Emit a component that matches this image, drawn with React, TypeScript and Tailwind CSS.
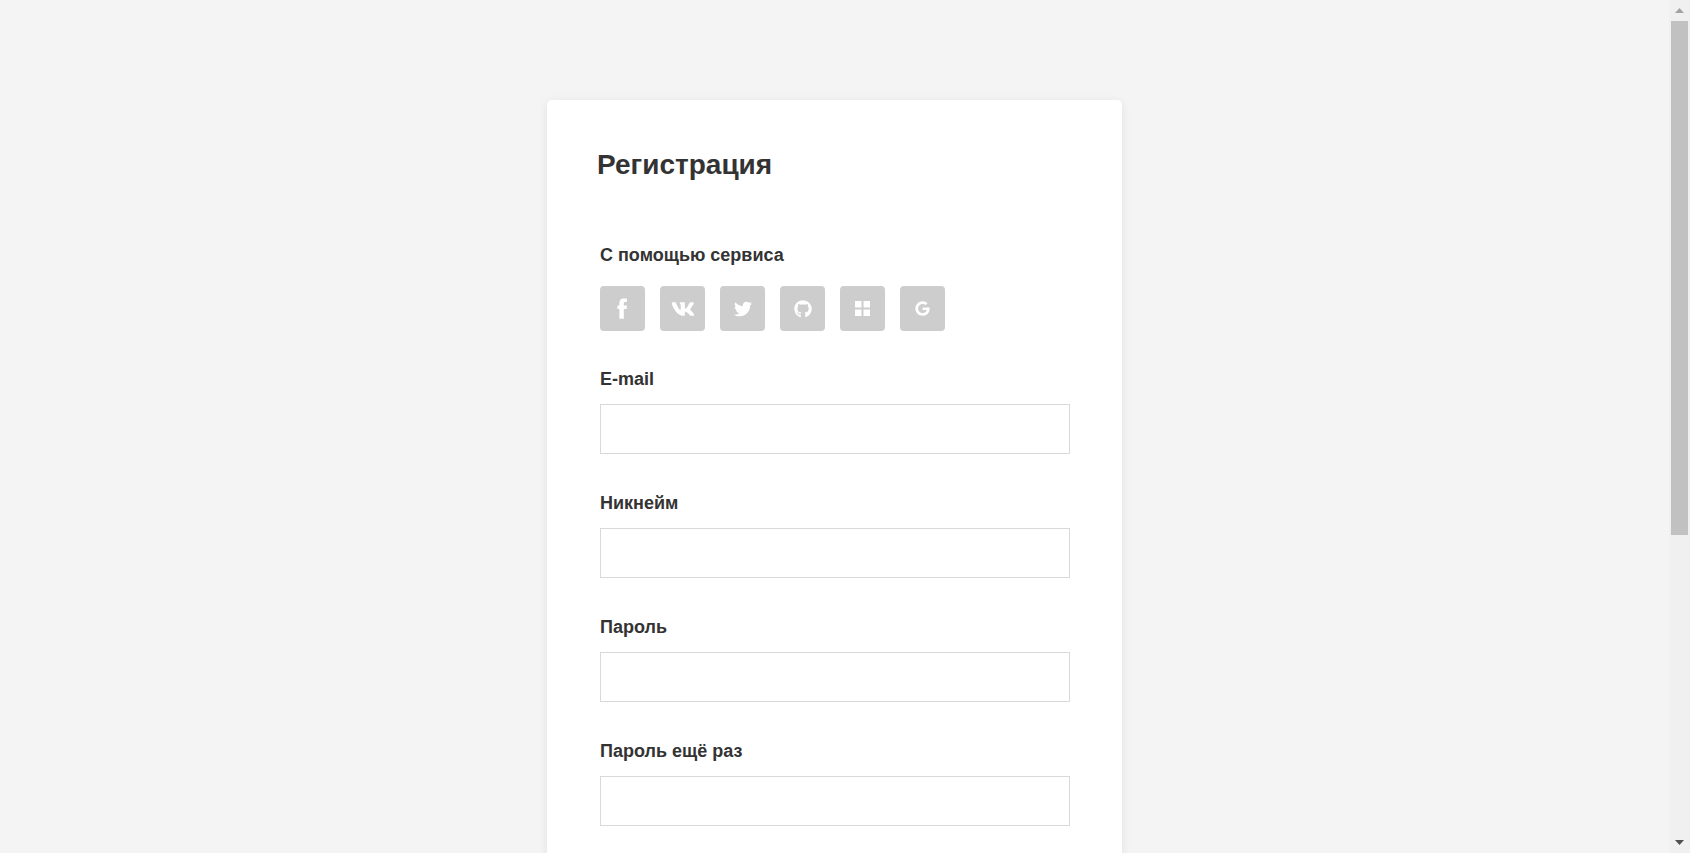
import React from "react";
import { FaTwitter, FaGithub, FaGoogle, FaVk } from "react-icons/fa";

function FacebookIcon() {
  return (
    <svg width="11" height="21" viewBox="0 0 11 21" fill="currentColor" aria-hidden="true">
      <path d="M2.4 20.7V11H.4V7.4h2V5.2C2.4 2.2 3.6.4 6.9.4h3v3.7H8.1C6.900 4.100 6.800 4.600 6.800 5.500V7.400h3.200L9.600 11H6.800v9.700z" />
    </svg>
  );
}

function TilesIcon() {
  return (
    <svg width="15" height="15" viewBox="0 0 15 15" fill="currentColor" aria-hidden="true">
      <path d="M0 0h6.500v6.500H0zM8.500 0H15v6.500H8.500zM0 8.500h6.500V15H0zM8.500 8.500H15V15H8.500z" />
    </svg>
  );
}

const services = [
  { name: "Facebook", icon: <FacebookIcon /> },
  { name: "ВКонтакте", icon: <FaVk className="h-6 w-6" /> },
  { name: "Twitter", icon: <FaTwitter className="h-[18px] w-[18px]" /> },
  { name: "GitHub", icon: <FaGithub className="h-[18px] w-[18px]" /> },
  { name: "Microsoft", icon: <TilesIcon /> },
  { name: "Google", icon: <FaGoogle className="h-[15px] w-[15px]" /> },
];

const fields = [
  { id: "email", label: "E-mail", type: "email" },
  { id: "nickname", label: "Никнейм", type: "text" },
  { id: "password", label: "Пароль", type: "password" },
  { id: "password-repeat", label: "Пароль ещё раз", type: "password" },
];

function ScrollBar() {
  return (
    <div aria-hidden="true" className="flex w-[21px] shrink-0 flex-col bg-[#f0f0f0] px-0.5">
      <div className="flex h-[21px] items-center justify-center">
        <svg width="9" height="5" viewBox="0 0 9 5" fill="#a3a3a3">
          <path d="M4.5 0L9 5H0z" />
        </svg>
      </div>
      <div className="flex-1">
        <div className="h-[63.4%] bg-[#c1c1c1]" />
      </div>
      <div className="flex h-[21px] items-center justify-center">
        <svg width="9" height="5" viewBox="0 0 9 5" fill="#505050">
          <path d="M0 0h9L4.5 5z" />
        </svg>
      </div>
    </div>
  );
}

export default function App() {
  return (
    <div className="flex h-screen overflow-hidden bg-[#f4f4f4] font-['Liberation_Sans',Arial,sans-serif] text-[#333]">
      <main className="flex-1 overflow-hidden pt-[100px]">
        <form className="mx-auto w-full max-w-[575px] rounded-[5px] bg-white px-[50px] py-[47px] shadow-[0_2px_10px_rgba(0,0,0,0.08)]">
          <h1 className="text-[28px] leading-9 font-bold">Регистрация</h1>
          <div className="pt-[60px] pr-0.5 pl-[3px]">
            <section className="mb-9">
              <h2 className="text-lg leading-6 font-bold">С помощью сервиса</h2>
              <div className="mt-[19px] flex gap-[15px]">
                {services.map((s) => (
                  <button
                    key={s.name}
                    type="button"
                    aria-label={s.name}
                    className="flex h-[45px] w-[45px] items-center justify-center rounded-[4px] bg-[#cdcdcd] text-white"
                  >
                    {s.icon}
                  </button>
                ))}
              </div>
            </section>
            <div className="flex flex-col gap-[37px]">
              {fields.map((f) => (
                <div key={f.id} className="flex flex-col gap-[13px]">
                  <label htmlFor={f.id} className="text-lg leading-6 font-bold">
                    {f.label}
                  </label>
                  <input
                    id={f.id}
                    name={f.id}
                    type={f.type}
                    className="h-[50px] w-full border border-[#d9d9d9] bg-white px-4 text-base outline-none focus:border-[#999]"
                  />
                </div>
              ))}
            </div>
          </div>
        </form>
      </main>
      <ScrollBar />
    </div>
  );
}
